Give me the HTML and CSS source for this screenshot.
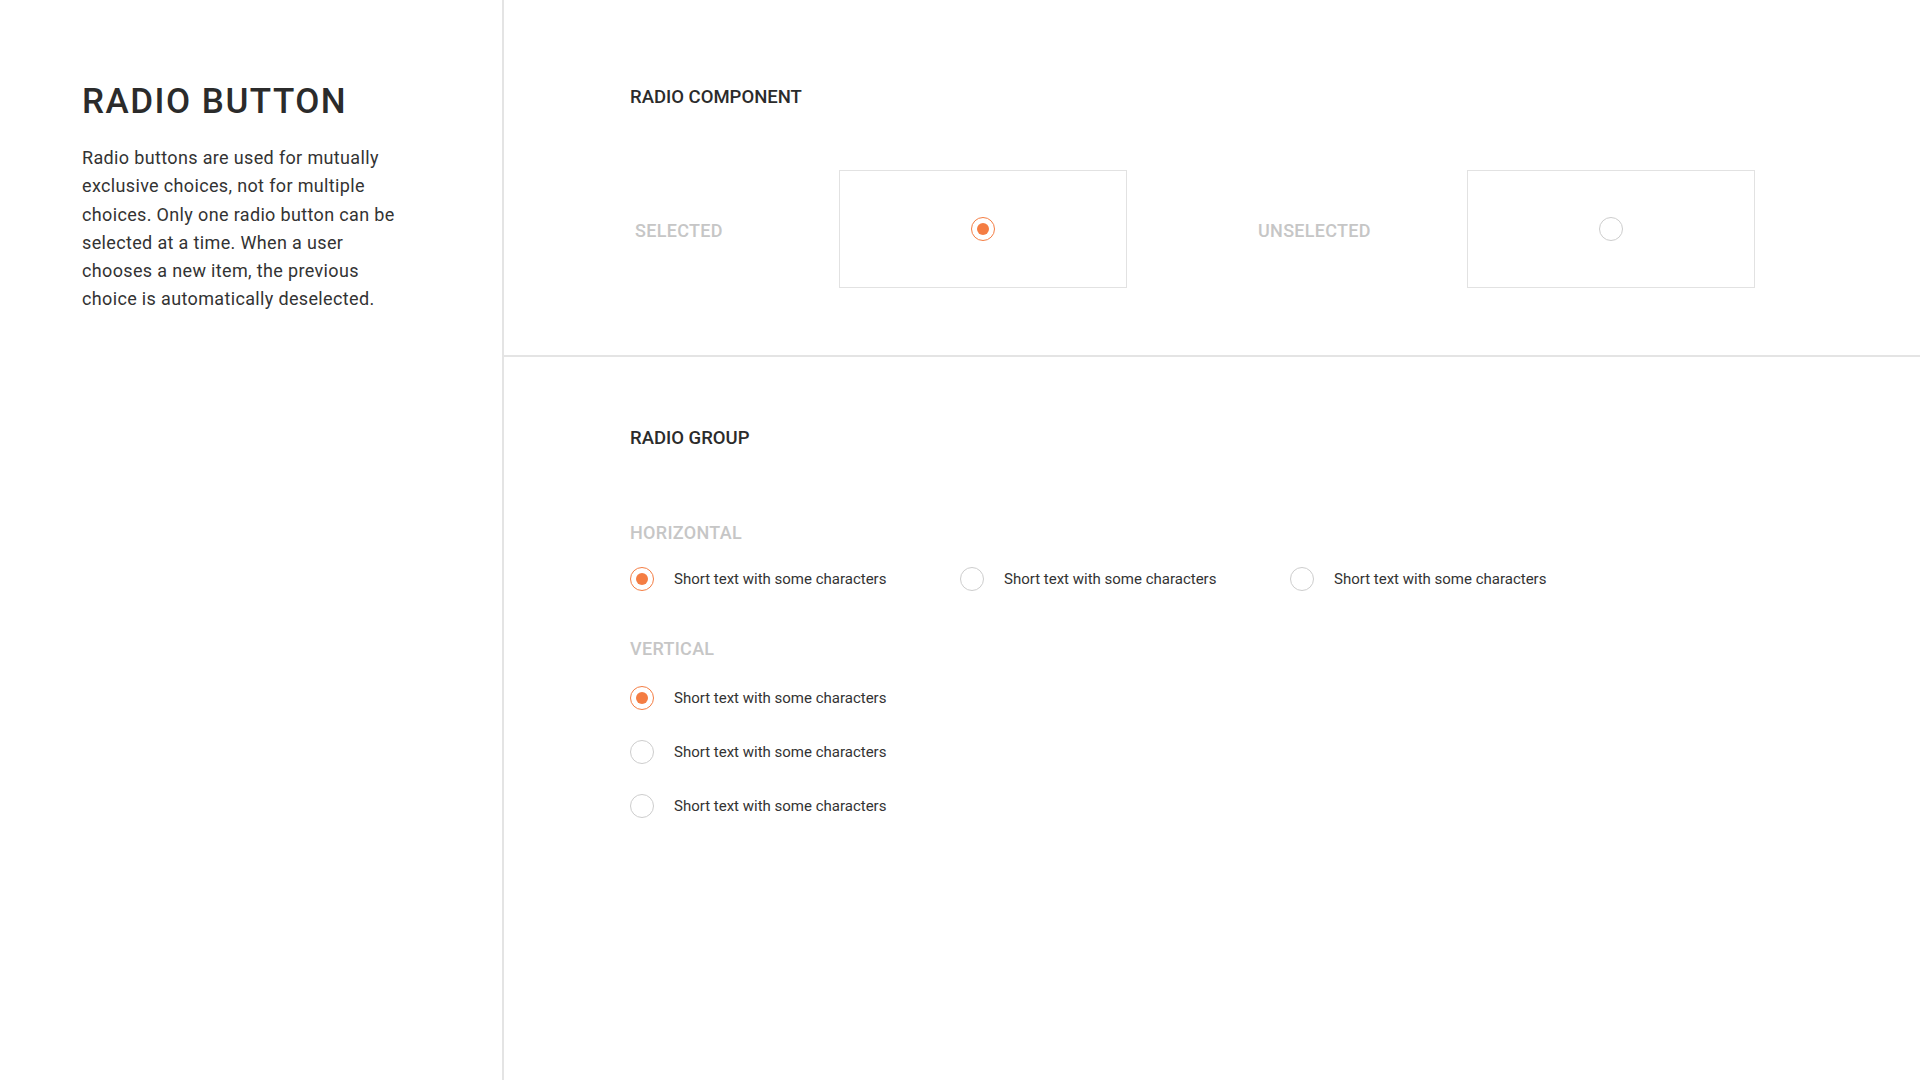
FILE: index.html
```html
<!DOCTYPE html>
<html lang="en">
<head>
  <meta charset="UTF-8" />
  <meta name="viewport" content="width=device-width, initial-scale=1.0" />
  <title>Radio Button</title>
  <link rel="stylesheet" href="styles.css">
</head>
<body>

  <aside class="intro">
    <h1>RADIO BUTTON</h1>
    <p>Radio buttons are used for mutually exclusive choices, not for multiple choices. Only one radio button can be selected at a time. When a user chooses a new item, the previous choice is automatically deselected.</p>
  </aside>

  <main class="content">

    <section class="section component">
      <h2>RADIO COMPONENT</h2>
      <div class="states">
        <div class="state">
          <span class="label">SELECTED</span>
          <div class="preview"><span class="radio checked"></span></div>
        </div>
        <div class="state">
          <span class="label">UNSELECTED</span>
          <div class="preview"><span class="radio"></span></div>
        </div>
      </div>
    </section>

    <section class="section group">
      <h2>RADIO GROUP</h2>

      <h3 class="label">HORIZONTAL</h3>
      <div class="options horizontal">
        <label class="option"><span class="radio checked"></span>Short text with some characters</label>
        <label class="option"><span class="radio"></span>Short text with some characters</label>
        <label class="option"><span class="radio"></span>Short text with some characters</label>
      </div>

      <h3 class="label">VERTICAL</h3>
      <div class="options vertical">
        <label class="option"><span class="radio checked"></span>Short text with some characters</label>
        <label class="option"><span class="radio"></span>Short text with some characters</label>
        <label class="option"><span class="radio"></span>Short text with some characters</label>
      </div>
    </section>

  </main>

</body>
</html>
```

FILE: styles.css
```css
body {
  margin: 0;
  font-family: Roboto, 'Noto Sans', sans-serif;
  background: #ffffff;
  color: #2e2e2e;
  display: flex;
  min-height: 100vh;
}

/* left column */
.intro {
  width: 504px;
  box-sizing: border-box;
  border-right: 2px solid #e4e4e4;
  padding: 84px 0 0 82px;
}

.intro h1 {
  margin: 0;
  font-size: 35px;
  line-height: 1;
  font-weight: 500;
  letter-spacing: 1.5px;
  color: #2b2b2b;
}

.intro p {
  margin: 25px 0 0;
  width: 320px;
  font-size: 18px;
  line-height: 28.3px;
  letter-spacing: 0.35px;
  color: #333;
}

/* right column */
.content {
  flex: 1;
}

.section {
  padding-left: 126px;
}

.section h2 {
  margin: 0;
  font-size: 18.5px;
  line-height: 19px;
  font-weight: 500;
  color: #2b2b2b;
}

.component {
  padding-top: 88px;
  padding-bottom: 67px;
  border-bottom: 2px solid #e4e4e4;
}

.group {
  padding-top: 72px;
}

.label {
  margin: 0;
  font-size: 18px;
  line-height: 1;
  font-weight: 500;
  letter-spacing: 0.3px;
  color: #c6c6c6;
}

.states {
  display: flex;
  gap: 131px;
  margin-top: 63px;
}

.state {
  display: flex;
  align-items: center;
}

.state .label {
  width: 209px;
  box-sizing: border-box;
  padding-top: 3px;
}

.state:first-child .label {
  padding-left: 5px;
}

.preview {
  width: 288px;
  height: 118px;
  box-sizing: border-box;
  border: 1px solid #e2e2e2;
  display: flex;
  align-items: center;
  justify-content: center;
}

/* radio control */
.radio {
  width: 24px;
  height: 24px;
  box-sizing: border-box;
  border: 1px solid #cdcdcd;
  border-radius: 50%;
  display: flex;
  align-items: center;
  justify-content: center;
  flex-shrink: 0;
}

.radio.checked {
  border-color: #f47d43;
}

.radio.checked::after {
  content: "";
  width: 12px;
  height: 12px;
  border-radius: 50%;
  background: #f47d43;
}

.group h3 {
  margin-top: 76px;
}

.group h3 + .options {
  margin-top: 25px;
}

.group .options.horizontal + h3 {
  margin-top: 49px;
}

.group .options.vertical {
  margin-top: 28px;
}

.options {
  display: flex;
}

.options.vertical {
  flex-direction: column;
  gap: 30px;
}

.option {
  display: flex;
  align-items: center;
  gap: 20px;
  font-size: 15px;
  color: #333;
}

.horizontal .option {
  width: 330px;
}
```
